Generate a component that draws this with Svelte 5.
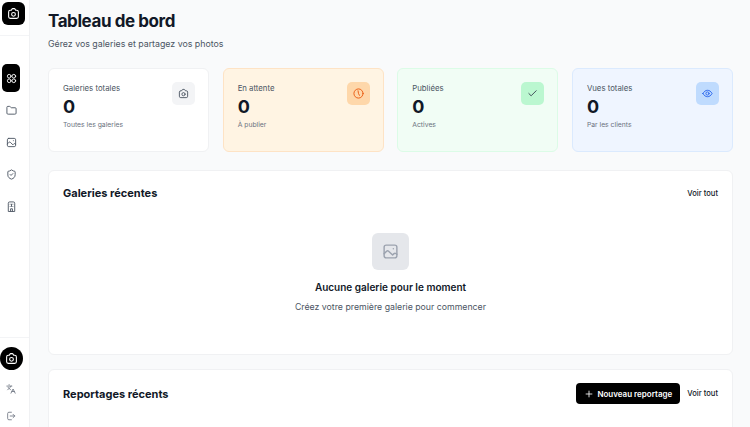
<script lang="ts">
  const stats = [
    { label: "Galeries totales", value: 0, note: "Toutes les galeries", tone: "plain", icon: "camera" },
    { label: "En attente", value: 0, note: "À publier", tone: "orange", icon: "clock" },
    { label: "Publiées", value: 0, note: "Actives", tone: "green", icon: "check" },
    { label: "Vues totales", value: 0, note: "Par les clients", tone: "blue", icon: "eye" },
  ];
</script>

{#snippet icon(name: string)}
  <svg class="icon" viewBox="0 0 24 24" fill="none" stroke="currentColor" stroke-width="2" stroke-linecap="round" stroke-linejoin="round">
    {#if name === "camera"}
      <path d="M8 6l1-1.900A2 2 0 0 1 10.800 3h2.400A2 2 0 0 1 15 4.100L16 6h2a3 3 0 0 1 3 3v9a3 3 0 0 1-3 3H6a3 3 0 0 1-3-3V9a3 3 0 0 1 3-3z" />
      <circle cx="12" cy="13.500" r="3.500" />
    {:else if name === "clock"}
      <circle cx="12" cy="12" r="10" />
      <path d="M11 6l1 6 2 4" />
    {:else if name === "check"}
      <path d="M20 6 9 17l-5-5" />
    {:else if name === "eye"}
      <path d="M2 12c2.500-4.500 6-7 10-7s7.500 2.500 10 7c-2.500 4.500-6 7-10 7s-7.500-2.500-10-7z" />
      <circle cx="12" cy="12" r="3.500" />
    {:else if name === "grid"}
      <circle cx="7" cy="7" r="4" />
      <circle cx="17" cy="7" r="4" />
      <circle cx="7" cy="17" r="4" />
      <circle cx="17" cy="17" r="4" />
    {:else if name === "folder"}
      <path d="M20 20a2 2 0 0 0 2-2V8a2 2 0 0 0-2-2h-7.900a2 2 0 0 1-1.700-.9l-.8-1.200A2 2 0 0 0 7.900 3H4a2 2 0 0 0-2 2v13a2 2 0 0 0 2 2z" />
    {:else if name === "image"}
      <rect x="3" y="3" width="18" height="18" rx="3" />
      <path d="m3 15 3.500-3.500a2 2 0 0 1 2.800 0L15 17l2-2a2 2 0 0 1 2.500-.2L21 16" />
      <path d="M16 8h.01" />
    {:else if name === "shield"}
      <path d="M20 13c0 5-3.500 7.500-7.700 9a1 1 0 0 1-.6 0C7.500 20.500 4 18 4 13V6a1 1 0 0 1 1-1c2 0 4.500-1.200 6.200-2.700a1.200 1.200 0 0 1 1.600 0C14.500 3.800 17 5 19 5a1 1 0 0 1 1 1z" />
      <path d="m9 12 2 2 4-4" />
    {:else if name === "building"}
      <path d="M5 22V5a3 3 0 0 1 3-3h8a3 3 0 0 1 3 3v17z" />
      <path d="M10 22v-5h4v5M9 7h.01M15 7h.01M9 12h.01M15 12h.01M12 7v5" />
    {:else if name === "lang"}
      <path d="m5 8 6 6M4 14l6-6 2-3M2 5h12M7 2h1M22 22l-5-10-5 10M14 18h6" />
    {:else if name === "logout"}
      <path d="M13 21H7a3 3 0 0 1-3-3V6a3 3 0 0 1 3-3h6M17 16l4-4-4-4M21 12H10" />
    {:else if name === "plus"}
      <path d="M5 12h14M12 5v14" />
    {/if}
  </svg>
{/snippet}

<div class="layout">
  <aside class="sidebar">
    <div class="brand">
      <span class="logo">{@render icon("camera")}</span>
    </div>
    <nav class="nav">
      <a class="nav-item active" href="#a">{@render icon("grid")}</a>
      <a class="nav-item" href="#a">{@render icon("folder")}</a>
      <a class="nav-item" href="#a">{@render icon("image")}</a>
      <a class="nav-item" href="#a">{@render icon("shield")}</a>
      <a class="nav-item" href="#a">{@render icon("building")}</a>
    </nav>
    <div class="sidebar-foot">
      <span class="avatar">{@render icon("camera")}</span>
      <span class="foot-item first">{@render icon("lang")}</span>
      <span class="foot-item">{@render icon("logout")}</span>
    </div>
  </aside>

  <main class="main">
    <h1>Tableau de bord</h1>
    <p class="subtitle">Gérez vos galeries et partagez vos photos</p>

    <div class="stats">
      {#each stats as stat}
        <div class={`stat tone-${stat.tone}`}>
          <div class="stat-text">
            <div class="stat-label">{stat.label}</div>
            <div class="stat-value">{stat.value}</div>
            <div class="stat-note">{stat.note}</div>
          </div>
          <div class="stat-icon">{@render icon(stat.icon)}</div>
        </div>
      {/each}
    </div>

    <section class="panel">
      <div class="panel-header">
        <h2>Galeries récentes</h2>
        <a class="see-all" href="#a">Voir tout</a>
      </div>
      <div class="empty">
        <div class="empty-icon">{@render icon("image")}</div>
        <div class="empty-title">Aucune galerie pour le moment</div>
        <div class="empty-text">Créez votre première galerie pour commencer</div>
      </div>
    </section>

    <section class="panel">
      <div class="panel-header">
        <h2>Reportages récents</h2>
        <div class="header-actions">
          <button class="primary">{@render icon("plus")}Nouveau reportage</button>
          <a class="see-all" href="#a">Voir tout</a>
        </div>
      </div>
    </section>
  </main>
</div>

<style>
  :global(body) {
    background: #f9fafb;
    font-family: Inter, "Liberation Sans", sans-serif;
    color: #111827;
    overflow: hidden;
  }

  .layout {
    display: flex;
    height: 427px;
    overflow: hidden;
  }

  .sidebar {
    width: 29px;
    flex: none;
    background: #fff;
    border-right: 1px solid #f0f1f3;
    display: flex;
    flex-direction: column;
  }

  .brand {
    height: 36px;
    padding: 2px 0 0 2px;
    box-sizing: border-box;
    border-bottom: 1px solid #f3f4f6;
  }

  .logo {
    width: 23px;
    height: 23px;
    border-radius: 6px;
    background: #000;
    color: #fff;
    display: flex;
    align-items: center;
    justify-content: center;
  }

  .logo .icon {
    width: 13px;
    height: 13px;
  }

  .nav {
    padding: 28px 0 0 2px;
    display: flex;
    flex-direction: column;
    gap: 4px;
  }

  .nav-item {
    width: 18px;
    height: 28px;
    border-radius: 5px;
    color: #4b5563;
    display: flex;
    align-items: center;
    justify-content: center;
  }

  .nav-item .icon {
    width: 11px;
    height: 11px;
  }

  .nav-item.active {
    background: #000;
    color: #fff;
  }

  .sidebar-foot {
    margin-top: auto;
    display: flex;
    flex-direction: column;
    align-items: flex-start;
    border-top: 1px solid #f3f4f6;
    padding: 9px 0 0;
    height: 80px;
  }

  .avatar {
    width: 23px;
    height: 23px;
    border-radius: 50%;
    background: #000;
    color: #fff;
    display: flex;
    align-items: center;
    justify-content: center;
    flex: none;
  }

  .avatar .icon {
    width: 13px;
    height: 13px;
  }

  .foot-item {
    width: 18px;
    height: 27px;
    margin-left: 2px;
    color: #6b7280;
    display: flex;
    align-items: center;
    justify-content: center;
    flex: none;
  }

  .foot-item.first {
    margin-top: 5px;
  }

  .foot-item .icon {
    width: 10px;
    height: 10px;
  }

  .main {
    flex: 1;
    min-width: 0;
    padding: 9px 17px 0 18px;
  }

  h1 {
    margin: 0;
    font-size: 17px;
    line-height: 24px;
    font-weight: 700;
    letter-spacing: -0.025em;
    color: #111827;
  }

  .subtitle {
    margin: 3px 0 0;
    font-size: 8.8px;
    line-height: 15px;
    color: #4b5563;
  }

  .stats {
    display: grid;
    grid-template-columns: repeat(4, 1fr);
    gap: 13.5px;
    margin-top: 17px;
  }

  .stat {
    height: 84px;
    box-sizing: border-box;
    border: 1px solid #f0f1f3;
    border-radius: 6px;
    background: #fff;
    padding: 13px 13px 13px 14px;
    display: flex;
    justify-content: space-between;
    align-items: flex-start;
  }

  .stat-label {
    font-size: 7.8px;
    line-height: 13px;
    color: #4b5563;
  }

  .stat-value {
    font-size: 18px;
    line-height: 24px;
    font-weight: 700;
    color: #111827;
  }

  .stat-note {
    font-size: 6.8px;
    line-height: 11px;
    color: #6b7280;
  }

  .stat-icon {
    width: 23px;
    height: 23px;
    border-radius: 5px;
    background: #f3f4f6;
    color: #4b5563;
    display: flex;
    align-items: center;
    justify-content: center;
  }

  .stat-icon .icon {
    width: 11px;
    height: 11px;
  }

  .tone-orange {
    background: #fff4e3;
    border-color: #fee3c5;
  }

  .tone-orange .stat-icon {
    background: #fed7aa;
    color: #ea580c;
  }

  .tone-green {
    background: #f1fdf5;
    border-color: #dcfce7;
  }

  .tone-green .stat-icon {
    background: #bbf7d0;
    color: #374151;
  }

  .tone-blue {
    background: #eff5ff;
    border-color: #dbeafe;
  }

  .tone-blue .stat-icon {
    background: #bfdbfe;
    color: #2563eb;
  }

  .panel {
    margin-top: 18px;
    background: #fff;
    border: 1px solid #f0f1f3;
    border-radius: 6px;
    padding: 0 14px;
  }

  .panel + .panel {
    margin-top: 14px;
    height: 120px;
  }

  .panel-header {
    height: 44px;
    display: flex;
    align-items: center;
    justify-content: space-between;
  }

  .panel + .panel .panel-header {
    height: 47px;
  }

  h2 {
    margin: 0;
    font-size: 11px;
    line-height: 18px;
    font-weight: 700;
    color: #111827;
  }

  .see-all {
    font-size: 7.6px;
    font-weight: 500;
    color: #111827;
    text-decoration: none;
  }

  .header-actions {
    display: flex;
    align-items: center;
    gap: 7px;
  }

  .primary {
    height: 21px;
    width: 104px;
    border: 0;
    border-radius: 4px;
    background: #000;
    color: #fff;
    font: 600 8px Inter, sans-serif;
    display: flex;
    align-items: center;
    justify-content: center;
    gap: 3px;
    padding: 0;
  }

  .primary .icon {
    width: 10px;
    height: 10px;
  }

  .empty {
    height: 139px;
    display: flex;
    flex-direction: column;
    align-items: center;
    padding-top: 18px;
    box-sizing: border-box;
  }

  .empty-icon {
    width: 37px;
    height: 37px;
    border-radius: 6px;
    background: #e5e7eb;
    color: #9ca3af;
    display: flex;
    align-items: center;
    justify-content: center;
  }

  .empty-icon .icon {
    width: 17px;
    height: 17px;
  }

  .empty-title {
    margin-top: 9px;
    font-size: 10px;
    line-height: 16px;
    font-weight: 600;
    color: #111827;
  }

  .empty-text {
    margin-top: 5px;
    font-size: 8.75px;
    line-height: 14px;
    color: #4b5563;
  }
</style>
